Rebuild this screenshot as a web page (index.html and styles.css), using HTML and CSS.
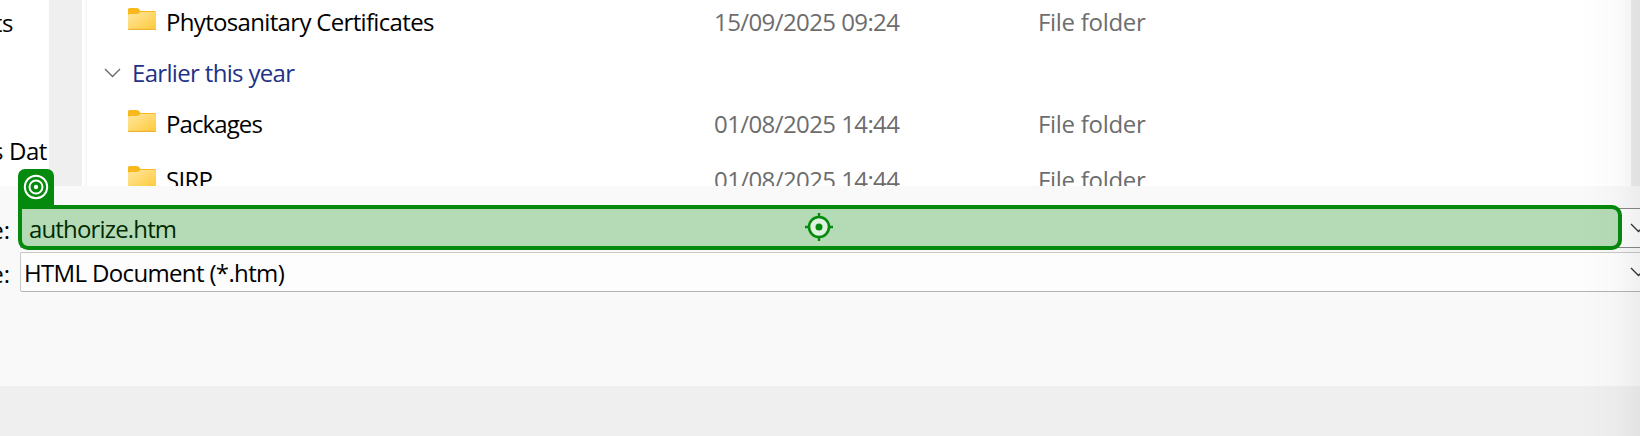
FILE: index.html
```html
<!DOCTYPE html>
<html lang="en">
<head>
<meta charset="utf-8">
<title>Save As</title>
<link rel="stylesheet" href="styles.css">
</head>
<body>
<svg class="defs" aria-hidden="true">
  <defs>
    <linearGradient id="fold" x1="0" y1="0" x2="1" y2="1"><stop offset="0" stop-color="#ffe7a2"/><stop offset="1" stop-color="#ffc937"/></linearGradient>
    <symbol id="folder" viewBox="0 0 28 22">
      <path d="M0 6V1.500Q0 0 1.500 0H8.500Q10 0 11 1L12.500 3H26.500Q28 3 28 4.500V8H0Z" fill="#f9b81b"/>
      <path d="M0 7.500Q0 6 1.500 6H8.500Q10 6 11 5.200L12.300 4H26.500Q28 4 28 5.500V20.500Q28 22 26.500 22H1.500Q0 22 0 20.500Z" fill="url(#fold)"/>
      <path d="M.3 21.400H27.700" stroke="#efb02c" stroke-width="1.100"/>
    </symbol>
    <symbol id="chevron" viewBox="0 0 16 10"><path d="M.5 1L8 8.500L15.500 1" fill="none" stroke="currentColor" stroke-width="1.300"/></symbol>
  </defs>
</svg>
<div class="dialog">
  <div class="browser">
    <div class="sidebar"><span class="tree t1">ts</span><span class="tree t2">s Dat</span></div>
    <div class="gutter"></div>
    <div class="files">
      <div class="row">
        <svg class="folder"><use href="#folder"/></svg><span class="name n1">Phytosanitary Certificates</span><span class="date">15/09/2025 09:24</span><span class="type">File folder</span>
      </div>
      <div class="group"><svg class="chevron"><use href="#chevron"/></svg><span class="grouptext">Earlier this year</span></div>
      <div class="row">
        <svg class="folder"><use href="#folder"/></svg><span class="name n2">Packages</span><span class="date">01/08/2025 14:44</span><span class="type">File folder</span>
      </div>
      <div class="row">
        <svg class="folder"><use href="#folder"/></svg><span class="name n3">SIRP</span><span class="date">01/08/2025 14:44</span><span class="type">File folder</span>
      </div>
    </div>
    <div class="scroll"></div>
  </div>
  <div class="form">
    <div class="line">
      <span class="label">e:</span>
      <div class="field active"><span class="value v1">authorize.htm</span><svg class="chevron drop"><use href="#chevron"/></svg></div>
      <div class="highlight">
        <div class="badge"><svg width="26" height="26" viewBox="0 0 26 26" fill="none" stroke="#fff" stroke-width="2"><circle cx="13" cy="13" r="11.200"/><circle cx="13" cy="13" r="6.500"/><circle cx="13" cy="13" r="2.200" fill="#fff" stroke="none"/></svg></div>
        <svg class="target" width="28" height="28" viewBox="0 0 28 28"><g stroke="#048a0c" stroke-width="2.400"><circle cx="14" cy="14" r="10" fill="#dff1df" stroke-width="2.600"/><path d="M14 0V5M14 23V28M0 14H5M23 14H28"/></g><circle cx="14" cy="14" r="3.500" fill="#048a0c"/></svg>
      </div>
    </div>
    <div class="line">
      <span class="label">e:</span>
      <div class="field"><span class="value v2">HTML Document (*.htm)</span><svg class="chevron drop"><use href="#chevron"/></svg></div>
    </div>
  </div>
  <div class="footer"></div>
  <div class="shade"></div>
</div>
</body>
</html>
```
FILE: styles.css
```css
* { box-sizing: border-box; }
body { margin: 0; font: 24px/32px "Open Sans", "Noto Sans", sans-serif; color: #000; overflow: hidden; }
.defs { position: absolute; width: 0; height: 0; }
.dialog { position: relative; width: 1640px; height: 436px; overflow: hidden; display: flex; flex-direction: column; }
span { white-space: nowrap; }
.browser { height: 186px; display: flex; overflow: hidden; background: #fff; }
.sidebar { width: 49px; display: flex; flex-direction: column; align-items: flex-end; overflow: hidden; padding-top: 7px; }
.tree { letter-spacing: -.4px; }
.t1 { margin-right: 36px; }
.t2 { margin: 96px 2px 0 0; }
.gutter { width: 33px; background: #efefef; }
.files { flex: 1; margin-left: 3px; border-left: 2px solid #f7f7f7; padding-left: 41px; margin-top: -5px; }
.row { height: 56px; display: grid; grid-template-columns: 38px 548px 325px 1fr; align-items: center; }
.row span { padding-bottom: 2px; }
.folder { width: 28px; height: 22px; margin-bottom: 8px; display: block; }
.date, .type { color: #6d6d6d; }
.date { letter-spacing: -.59px; }
.type { letter-spacing: -.3px; margin-left: -1px; }
.n1 { letter-spacing: -.67px; }
.n2 { letter-spacing: -.9px; }
.n3 { letter-spacing: -.7px; }
.group { height: 46px; display: flex; align-items: center; margin-left: -24px; padding-bottom: 3px; gap: 11px; color: #1e3287; }
.chevron { width: 17px; height: 10px; flex: none; color: #666; }
.grouptext { letter-spacing: -.67px; }
.scroll { width: 9px; background: #ededed; }
.form { height: 200px; background: #f9f9f9; padding-top: 22px; display: flex; flex-direction: column; gap: 4px; }
.line { position: relative; height: 40px; display: flex; align-items: center; }
.label { width: 20px; display: flex; justify-content: flex-end; padding: 3px 10px 0 0; }
.field { flex: 1; height: 40px; display: flex; align-items: center; justify-content: space-between; background: #fdfdfd; border: 1px solid #c8c8c8; border-bottom-color: #b3b3b3; border-right: 0; border-radius: 2px 0 0 2px; padding-left: 3px; }
.active { border-color: #888; padding-left: 8px; }
.value { padding-top: 2px; }
.v1 { letter-spacing: -.84px; }
.v2 { letter-spacing: -.65px; }
.drop { color: #333; margin-right: -7px; }
.highlight { position: absolute; left: 18px; top: -3px; width: 1604px; height: 45px; border: 4px solid #048a0c; border-radius: 0 10px 10px 10px; background: rgba(4,138,12,.29); display: flex; align-items: center; justify-content: center; }
.badge { position: absolute; left: -4px; top: -40px; width: 36px; height: 36px; background: #048a0c; border-radius: 7px 7px 0 0; display: flex; align-items: center; justify-content: center; }
.target { display: block; margin: 0 2px 1px 0; }
.footer { height: 50px; background: #efefef; }
.shade { position: absolute; right: 0; top: 0; width: 60px; height: 436px; background: linear-gradient(90deg, transparent, rgba(0,0,0,.015) 60%, rgba(0,0,0,.05)); }
```
